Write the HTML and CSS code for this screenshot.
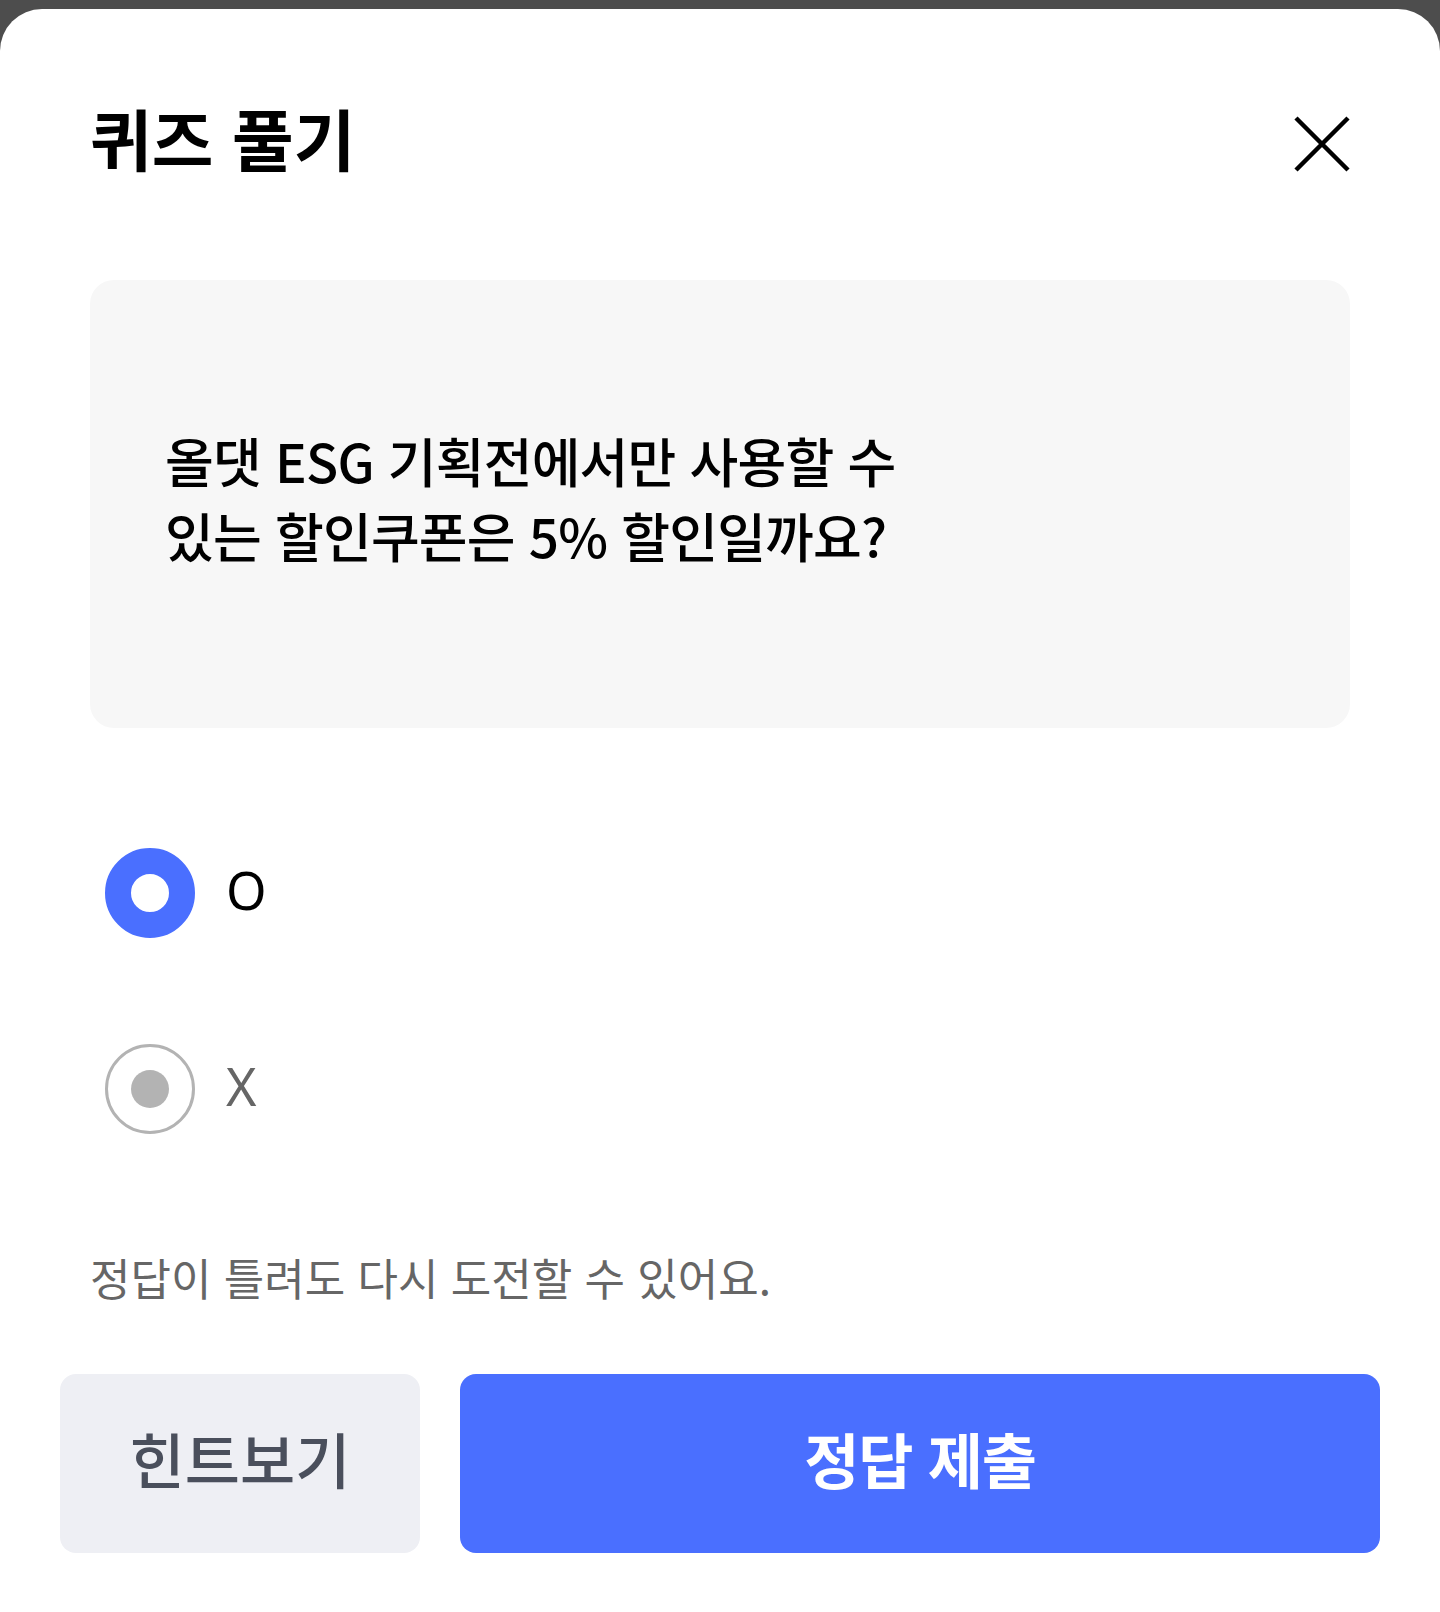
FILE: index.html
```html
<!DOCTYPE html>
<html lang="ko">
<head>
<meta charset="utf-8">
<title>퀴즈 풀기</title>
<link rel="stylesheet" href="styles.css">
</head>
<body>
<div class="sheet">
  <header class="head">
    <h1 class="title">퀴즈 풀기</h1>
    <button class="close" type="button" aria-label="닫기">
      <svg width="56" height="56" viewBox="0 0 56 56"><path d="M2 2 L54 54 M54 2 L2 54" stroke="#000" stroke-width="4.5" fill="none"/></svg>
    </button>
  </header>

  <div class="question">
    <p class="qtext">올댓 ESG 기획전에서만 사용할 수<br>있는 할인쿠폰은 5% 할인일까요?</p>
  </div>

  <div class="options">
    <div class="option">
      <span class="radio radio-on"></span>
      <span class="opt-label">O</span>
    </div>
    <div class="option">
      <span class="radio radio-off"><span class="dot"></span></span>
      <span class="opt-label opt-muted">X</span>
    </div>
  </div>

  <p class="notice">정답이 틀려도 다시 도전할 수 있어요.</p>

  <div class="actions">
    <button class="btn btn-hint" type="button"><span class="btn-text">힌트보기</span></button>
    <button class="btn btn-submit" type="button"><span class="btn-text">정답 제출</span></button>
  </div>
</div>
</body>
</html>
```
FILE: styles.css
```css
* { box-sizing: border-box; }
html, body { margin: 0; padding: 0; }
body {
  background: #4d4d4d;
  font-family: "Noto Sans CJK KR", "Noto Sans", sans-serif;
  color: #000;
}
.sheet {
  margin-top: 9px;
  background: #fff;
  border-radius: 42px 42px 0 0;
  min-height: 1603px;
  padding: 0 90px;
}
.head {
  display: flex;
  align-items: center;
  justify-content: space-between;
  height: 100px;
  padding-top: 82px;
  box-sizing: content-box;
}
.title {
  margin: 0 0 10px;
  font-size: 67px;
  font-weight: 700;
  line-height: 1;
  white-space: nowrap;
}
.close {
  border: 0;
  background: none;
  padding: 0;
  margin-top: 6px;
  width: 56px;
  height: 56px;
  display: block;
}
.close svg { display: block; }
.question {
  margin-top: 89px;
  height: 448px;
  background: #f7f7f7;
  border-radius: 24px;
  display: flex;
  align-items: center;
  padding: 0 75px 12px;
}
.qtext {
  margin: 0;
  font-size: 53px;
  font-weight: 500;
  letter-spacing: -0.8px;
  line-height: 75px;
  white-space: nowrap;
}
.options {
  margin-top: 120px;
  display: flex;
  flex-direction: column;
  gap: 106px;
  padding-left: 15px;
}
.option {
  display: flex;
  align-items: center;
  height: 90px;
  gap: 31px;
}
.radio {
  width: 90px;
  height: 90px;
  border-radius: 50%;
  flex: none;
  display: flex;
  align-items: center;
  justify-content: center;
}
.radio-on {
  border: 26px solid #4a6fff;
  background: #fff;
}
.radio-off {
  border: 3px solid #b3b3b3;
}
.dot {
  width: 38px;
  height: 38px;
  border-radius: 50%;
  background: #b3b3b3;
}
.opt-label {
  font-family: "Noto Sans", sans-serif;
  font-size: 52px;
  line-height: 1;
  color: #000;
  margin-bottom: 7px;
}
.opt-muted { color: #666; }
.notice {
  margin: 113px 0 0;
  font-size: 44px;
  line-height: 60px;
  color: #666;
  white-space: nowrap;
}
.actions {
  margin: 67px -30px 0;
  display: flex;
  gap: 40px;
}
.btn {
  border: 0;
  height: 179px;
  border-radius: 16px;
  font-family: "Noto Sans CJK KR", "Noto Sans", sans-serif;
  font-size: 60px;
  padding: 0 0 12px;
  line-height: 1;
}
.btn-hint {
  width: 360px;
  background: #eeeff4;
  color: #4a4f5c;
  font-weight: 500;
}
.btn-submit {
  flex: 1;
  background: #4a6fff;
  color: #fff;
  font-weight: 700;
  letter-spacing: -1.2px;
}
```
